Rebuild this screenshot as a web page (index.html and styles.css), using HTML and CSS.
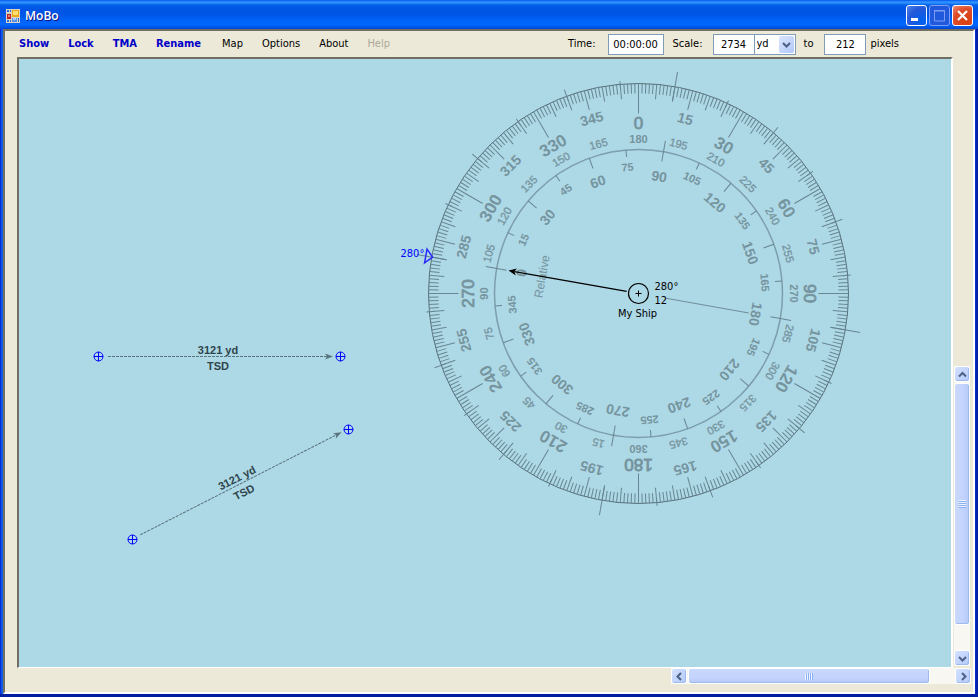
FILE: index.html
```
<!DOCTYPE html>
<html lang="en">
<head>
<meta charset="utf-8">
<title>MoBo</title>
<link rel="stylesheet" href="styles.css">
</head>
<body>
<div class="window">
  <header class="titlebar">
    <svg class="app-icon" width="14" height="14" viewBox="0 0 14 14" aria-hidden="true">
      <rect width="14" height="14" fill="#d8d4c4"/>
      <rect x="1" y="1" width="2" height="2" fill="#2a6be0"/><rect x="4" y="1" width="1" height="2" fill="#2a6be0"/>
      <rect x="1" y="5" width="4" height="5" fill="#b8202a"/><rect x="2" y="6" width="2" height="2" fill="#f08070"/>
      <rect x="6" y="1" width="7" height="7" fill="#e8a818"/><rect x="7" y="2" width="5" height="4" fill="#ffe070"/>
      <rect x="1" y="11" width="2" height="2" fill="#2a6be0"/><rect x="4" y="11" width="1" height="2" fill="#2a6be0"/>
      <rect x="6" y="9" width="5" height="4" fill="#5a90e8"/><rect x="7" y="9" width="3" height="2" fill="#a8ccff"/>
      <rect x="12" y="9" width="1" height="4" fill="#2a6be0"/>
    </svg>
    <h1 class="title">MoBo</h1>
    <div class="window-buttons">
      <button class="win-btn" aria-label="Minimize"><svg width="19" height="19"><rect x="4" y="12" width="7" height="3" fill="#fff"/></svg></button>
      <button class="win-btn win-btn-off" aria-label="Maximize" disabled><svg width="19" height="19"><path d="M4 5h11M4.500 4v11h10V4M4 4.500h11" fill="none" stroke="#7f9df0"/></svg></button>
      <button class="win-btn win-btn-close" aria-label="Close"><svg width="19" height="19"><path d="M5 5l9 9M14 5l-9 9" stroke="#fff" stroke-width="2.200"/></svg></button>
    </div>
  </header>
  <main class="client">
    <div class="toolbar">
      <nav class="menu">
        <button class="menu-item strong">Show</button>
        <button class="menu-item strong">Lock</button>
        <button class="menu-item strong">TMA</button>
        <button class="menu-item strong">Rename</button>
        <button class="menu-item">Map</button>
        <button class="menu-item">Options</button>
        <button class="menu-item">About</button>
        <button class="menu-item" disabled>Help</button>
      </nav>
      <form class="scale-form">
        <label for="time">Time:</label>
        <input class="field time" id="time" value="00:00:00">
        <label class="scale-label" for="distance">Scale:</label>
        <input class="field distance" id="distance" value="2734">
        <span class="combo">
          <select id="unit" aria-label="Unit"><option>yd</option></select>
          <svg class="combo-arrow" width="15" height="17" viewBox="0 0 15 17" aria-hidden="true"><path d="M4 7l3.500 3.500L11 7" fill="none" stroke="#4d6185" stroke-width="2"/></svg>
        </span>
        <label class="to-label" for="pixels">to</label>
        <input class="field pixels" id="pixels" value="212">
        <label for="pixels">pixels</label>
      </form>
    </div>
    <div class="workspace">
      <div class="chart">
        <svg class="plot" id="plot">
          <g class="track">
            <path class="track-line" d="M89 297.500H311"/>
            <path class="arrow-head" d="M314 297.500l-8-3 2 3-2 3z"/>
            <text x="199" y="295">3121 yd</text>
            <text x="199" y="311">TSD</text>
          </g>
          <g class="track" transform="translate(221 425) rotate(-27)">
            <path class="track-line" d="M-112 0H110"/>
            <path class="arrow-head" d="M114 0l-8-3 2 3-2 3z"/>
            <text x="0" y="-3">3121 yd</text>
            <text x="0" y="13">TSD</text>
          </g>
          <g class="waypoint">
            <path transform="translate(79.500 297.500)" d="M-4.500 0a4.500 4.500 0 1 0 9 0a4.500 4.500 0 1 0-9 0H4.500M0-4.500V4.500"/>
            <path transform="translate(321.500 297.500)" d="M-4.500 0a4.500 4.500 0 1 0 9 0a4.500 4.500 0 1 0-9 0H4.500M0-4.500V4.500"/>
            <path transform="translate(113.500 480.500)" d="M-4.500 0a4.500 4.500 0 1 0 9 0a4.500 4.500 0 1 0-9 0H4.500M0-4.500V4.500"/>
            <path transform="translate(329.500 370.500)" d="M-4.500 0a4.500 4.500 0 1 0 9 0a4.500 4.500 0 1 0-9 0H4.500M0-4.500V4.500"/>
          </g>
          <g transform="translate(619.500 234.500)">
            <g id="compass"></g>
            <g class="course" transform="rotate(280)">
              <path class="course-mark" d="M0-209l-7-7h14z"/>
              <path class="stern-line" d="M0 28V112"/>
              <path class="heading-line" d="M0-12V-126"/>
              <path class="heading-head" d="M0-132l-3.500 8 3.500-2 3.500 2z"/>
            </g>
            <circle class="ship" r="10"/>
            <path class="ship-cross" d="M-3 0H3M0-3V3"/>
            <text class="note" x="16" y="-4">280°</text>
            <text class="note" x="16" y="10">12</text>
            <text class="note middle" x="-1" y="23">My Ship</text>
            <text class="note course-note" x="-238" y="-37">280°</text>
          </g>
        </svg>
      </div>
      <div class="side">
        <div class="scrollbar vertical">
          <button class="scroll-btn" aria-label="Scroll up"><svg width="13" height="13"><path d="M3 8.500L6.500 5L10 8.500"/></svg></button>
          <div class="thumb"><span class="grip"></span></div>
          <button class="scroll-btn" aria-label="Scroll down"><svg width="13" height="13"><path d="M3 5L6.500 8.500L10 5"/></svg></button>
        </div>
      </div>
      <div class="bottom">
        <div class="scrollbar horizontal">
          <button class="scroll-btn" aria-label="Scroll left"><svg width="13" height="13"><path d="M8 3L4.500 6.500L8 10"/></svg></button>
          <div class="thumb"><span class="grip"></span></div>
          <button class="scroll-btn" aria-label="Scroll right"><svg width="13" height="13"><path d="M5 3L8.500 6.500L5 10"/></svg></button>
        </div>
      </div>
    </div>
  </main>
</div>
<script src="compass.js"></script>
</body>
</html>
```
FILE: compass.js
```
const NS = "http://www.w3.org/2000/svg";
const compass = document.getElementById("compass");
const COURSE = 280;

function add(name, attrs, text) {
  const node = document.createElementNS(NS, name);
  for (const key in attrs) node.setAttribute(key, attrs[key]);
  if (text !== undefined) node.textContent = text;
  compass.appendChild(node);
}
function tick(bearing, from, to, cls) {
  add("path", { class: cls, d: `M0 ${-from}V${-to}`, transform: `rotate(${bearing})` });
}
function label(bearing, radius, cls, text) {
  add("text", { class: "dial " + cls, transform: `rotate(${bearing}) translate(0 ${-radius})` }, text);
}

// True bearing ring
add("circle", { class: "ring outer", r: 210 });
for (let b = 0; b < 360; b++) {
  const length = b % 30 === 0 ? 30 : b % 15 === 0 ? 20 : b % 5 === 0 ? 15 : 10;
  tick(b, 210 - length, 210, "tick");
}
for (let b = 0; b < 360; b += 15) {
  if (b % 30 === 0) label(b, 165, b % 90 === 0 ? "large cardinal" : "large", b);
  else label(b, 176, "medium", b);
  label(b, 151, b % 90 === 0 ? "small heavy" : "small", (b + 180) % 360 || 360);
}

// Relative bearing ring, turned to the ship's course
add("circle", { class: "ring", r: 144 });
for (let r = 0; r < 360; r += 15) {
  const b = (r + COURSE) % 360;
  if (r % 90 === 0) {
    tick(b, 134, 155, "tick");
    tick(b, 195, 225, "tick");
  } else {
    tick(b, r % 30 === 0 ? 133 : 137, 144, "tick");
    tick(b, 205, r % 30 === 0 ? 217 : 213, "tick");
  }
  if (r % 30 === 0) label(b, 114, "relative", r);
  else label(b, 123, "small heavy", r);
}
label(COURSE, 94, "caption", "Relative");
```
FILE: styles.css
```
* { box-sizing: border-box; }
body {
  margin: 0;
  font: 11px/14px "DejaVu Sans Condensed", "DejaVu Sans", sans-serif;
  color: #000;
}
button, input, select { font: inherit; color: inherit; margin: 0; padding: 0; }
button { border: 0; background: none; }
svg { display: block; }

.window {
  display: flex;
  flex-direction: column;
  height: 100vh;
  overflow: hidden;
  padding: 0 3px 3px;
  background: linear-gradient(90deg, #0019cf, #166aee 2px, #0855dd 3px, #0855dd calc(100% - 3px), #0831d9 calc(100% - 3px), #001ea0 calc(100% - 1px));
  box-shadow: inset 0 -3px #001ea0;
}
.titlebar {
  display: flex;
  align-items: center;
  flex: none;
  height: 29px;
  margin: 0 -3px;
  padding: 2px 5px 0 6px;
  background: linear-gradient(#0058ee 0, #3593ff 2px, #288eff 3px, #0460e8 5px, #0055e5 9px, #0055e5 14px, #0062f8 20px, #0067ff 25px, #0058e8 27px, #0144d0 29px);
}
.title {
  margin: 0 auto 0 5px;
  font: 600 12px/16px "Open Sans", "Noto Sans", sans-serif;
  color: #fff;
  text-shadow: 1px 1px #0f1089;
}
.window-buttons { display: flex; gap: 2px; }
.win-btn {
  width: 21px;
  height: 21px;
  border: 1px solid #fff;
  border-radius: 3px;
  background: radial-gradient(circle at 80% 80%, #0062f0, #2458d8 60%, #5486ea);
}
.win-btn-off { border-color: #7f9df0; background: #2159dc; }
.win-btn-close { background: radial-gradient(circle at 70% 80%, #d84010, #dd4c28 60%, #ee9078); }

.client {
  display: flex;
  flex-direction: column;
  flex: 1;
  min-height: 0;
  background: #ece9d8;
  border: 2px solid;
  border-color: #716f64 #fff #fff #716f64;
}
.toolbar {
  display: flex;
  align-items: center;
  flex: none;
  height: 26px;
  padding: 0 74px 0 14px;
}
.menu { display: flex; gap: 19px; margin-right: auto; }
.strong { font-weight: bold; color: #0000c8; }
.strong + .menu-item:not(.strong) { margin-left: 2px; }
.menu-item:disabled { color: #aca899; }
.scale-form { display: flex; align-items: center; }
.field {
  height: 21px;
  border: 1px solid #7f9db9;
  background: #fff;
  text-align: center;
}
.time { width: 56px; margin: 0 9px 0 12px; }
.scale-label { margin-right: 10px; }
.distance { width: 42px; }
.pixels { width: 42px; margin: 0 4px 0 11px; }
.to-label { margin-left: 8px; }
.combo { position: relative; width: 42px; height: 21px; margin-left: -1px; }
.combo select {
  appearance: none;
  display: block;
  width: 100%;
  height: 100%;
  padding: 0 2px;
  border: 1px solid #7f9db9;
  border-radius: 0;
  background: #fff;
}
.combo-arrow {
  position: absolute;
  top: 2px;
  right: 2px;
  border-radius: 2px;
  background: linear-gradient(135deg, #dbe5ff, #b0c8f8);
  pointer-events: none;
}

.workspace {
  display: grid;
  grid-template: minmax(0, 1fr) 24px / minmax(0, 1fr) 20px;
  flex: 1;
  min-height: 0;
  padding-left: 12px;
}
.chart {
  overflow: hidden;
  background: #add8e6;
  border: 2px solid;
  border-color: #716f64 #fff #fff #716f64;
  border-bottom-width: 1px;
}
.plot { width: 100%; height: 100%; overflow: hidden; }
.side, .bottom { display: flex; }
.side { align-items: flex-end; justify-content: flex-end; padding: 0 3px 2px 0; }
.bottom { grid-column: 1 / -1; align-items: flex-start; justify-content: flex-end; padding-right: 2px; }

.scrollbar { display: flex; background: #f8f7f2; }
.vertical { flex-direction: column; width: 16px; height: 300px; }
.horizontal { width: 300px; height: 16px; }
.scroll-btn, .thumb {
  display: flex;
  align-items: center;
  justify-content: center;
  flex: none;
  border: 1px solid #fff;
  border-radius: 3px;
  background: linear-gradient(135deg, #d3e0ff, #b4cbfb);
  box-shadow: inset -1px -1px #9db9ee;
}
.scroll-btn { width: 16px; height: 16px; }
.scroll-btn:last-child { margin-left: auto; }
.vertical .scroll-btn:last-child { margin: auto 0 0; }
.scroll-btn path { fill: none; stroke: #4d6185; stroke-width: 2; }
.vertical .thumb { height: 242px; margin-top: 1px; background: linear-gradient(90deg, #c9d8fc, #c4d3fc 60%, #b3caf8); }
.horizontal .thumb { width: 242px; margin-left: 1px; background: linear-gradient(#c9d8fc, #c4d3fc 60%, #b3caf8); }
.vertical .grip { width: 7px; height: 8px; background: repeating-linear-gradient(#eef4fe 0 1px, #8cb0f8 1px 2px); }
.horizontal .grip { width: 8px; height: 7px; background: repeating-linear-gradient(90deg, #eef4fe 0 1px, #8cb0f8 1px 2px); }

.ring { fill: none; stroke: #7d9eac; stroke-width: 1.500; }
.ring.outer { stroke: #56707a; stroke-width: 1; }
.tick { fill: none; stroke: #688691; stroke-width: 1; }
.dial { font-family: "Liberation Sans", Arial, sans-serif; fill: #75949e; text-anchor: middle; }
.large { font-size: 17px; font-weight: bold; }
.cardinal { font-weight: normal; stroke: #75949e; stroke-width: 0.800; }
.medium { font-size: 14px; font-weight: bold; }
.small { font-size: 11px; stroke: #75949e; stroke-width: 0.300; }
.heavy { font-weight: bold; stroke: none; }
.relative { font-size: 14px; font-weight: bold; }
.caption { font-size: 12px; }
.track text { font: bold 11px "Liberation Sans", Arial, sans-serif; fill: #2f454b; text-anchor: middle; }
.track-line { fill: none; stroke: #5a747d; stroke-dasharray: 3 1; }
.arrow-head { fill: #5a747d; }
.waypoint { fill: none; stroke: #00f; stroke-width: 1; }
.course-mark { fill: none; stroke: #2a2aff; stroke-width: 1.500; }
.stern-line { stroke: #708f9a; }
.heading-line { stroke: #000; stroke-width: 1.300; }
.heading-head { fill: #000; }
.ship { fill: none; stroke: #000; stroke-width: 1.200; }
.ship-cross { stroke: #000; }
.middle { text-anchor: middle; }
.course-note { fill: #00f; }
```
